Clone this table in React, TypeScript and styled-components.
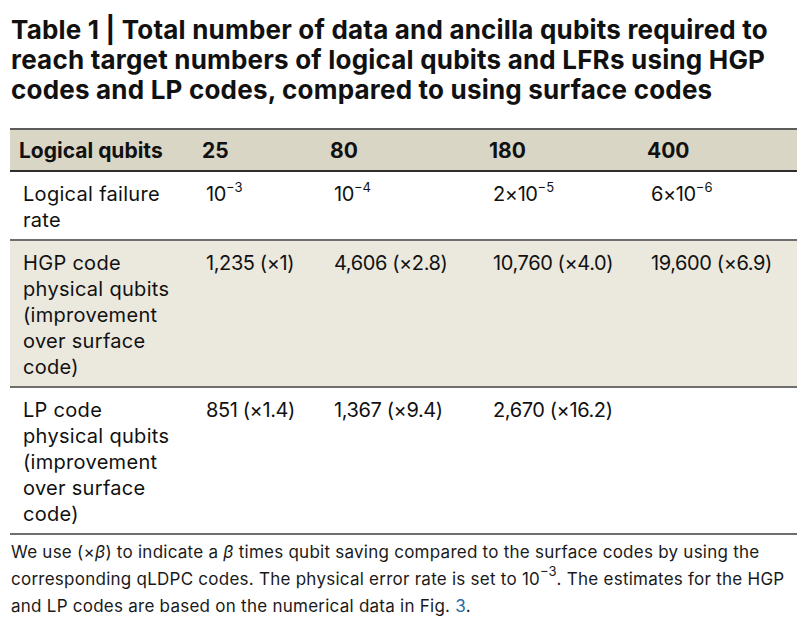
import styled, { createGlobalStyle } from "styled-components";

const GlobalStyle = createGlobalStyle`
  body {
    margin: 0;
    background: #ffffff;
    color: #111111;
    font-family: Inter, "Liberation Sans", Arial, sans-serif;
  }
`;

const Page = styled.div`
  width: 808px;
  height: 628px;
  padding: 15px 10px 0 11px;
  box-sizing: border-box;
  overflow: hidden;
`;

const Title = styled.h1`
  margin: 0;
  font-size: 26px;
  line-height: 30px;
  font-weight: 700;
  letter-spacing: 0.2px;
  white-space: nowrap;
`;

const Table = styled.table`
  margin-top: 23px;
  margin-left: -1px;
  width: 787px;
  border-collapse: collapse;
  table-layout: fixed;
  border-top: 2px solid #5c5c5c;
  border-bottom: 2px solid #5c5c5c;
`;

const HeadRow = styled.tr`
  background: #d9d6c6;
  border-bottom: 2px solid #2e2e2e;
`;

const HeadCell = styled.th`
  height: 40px;
  padding: 0 0 0 9px;
  text-align: left;
  font-size: 21px;
  font-weight: 700;
  letter-spacing: 0;
`;

const Row = styled.tr<{ $shaded?: boolean }>`
  background: ${(p) => (p.$shaded ? "#ebe8de" : "#ffffff")};
  border-bottom: 2px solid #6e6e6e;
`;

const Cell = styled.td<{ $label?: boolean }>`
  padding: 9px 4px 6px 13px;
  vertical-align: top;
  font-size: 20px;
  line-height: 26px;
  letter-spacing: ${(p) => (p.$label ? "0.3px" : "-0.4px")};
  white-space: nowrap;
`;

const Sup = styled.sup`
  font-size: 13px;
  line-height: 0;
  vertical-align: 9px;
  letter-spacing: 0;
`;

const Note = styled.p`
  margin: 4px 0 0;
  font-size: 17px;
  line-height: 27px;
  color: #1a1a1a;
  letter-spacing: 0.25px;
  white-space: nowrap;
`;

const Link = styled.span`
  color: #2a6ba6;
`;

const Beta = () => <i>β</i>;

const columns = [183, 128, 159, 158, 159];

const rows: { label: string[]; values: React.ReactNode[]; shaded?: boolean }[] = [
  {
    label: ["Logical failure", "rate"],
    values: [
      <>10<Sup>−3</Sup></>,
      <>10<Sup>−4</Sup></>,
      <>2×10<Sup>−5</Sup></>,
      <>6×10<Sup>−6</Sup></>,
    ],
  },
  {
    label: ["HGP code", "physical qubits", "(improvement", "over surface", "code)"],
    values: ["1,235 (×1)", "4,606 (×2.8)", "10,760 (×4.0)", "19,600 (×6.9)"],
    shaded: true,
  },
  {
    label: ["LP code", "physical qubits", "(improvement", "over surface", "code)"],
    values: ["851 (×1.4)", "1,367 (×9.4)", "2,670 (×16.2)", ""],
  },
];

const App = () => {
  return (
    <>
      <GlobalStyle />
      <Page>
        <Title>
          Table 1 | Total number of data and ancilla qubits required to
          <br />
          reach target numbers of logical qubits and LFRs using HGP
          <br />
          codes and LP codes, compared to using surface codes
        </Title>
        <Table>
          <colgroup>
            {columns.map((w, i) => (
              <col key={i} style={{ width: w }} />
            ))}
          </colgroup>
          <thead>
            <HeadRow>
              <HeadCell>Logical qubits</HeadCell>
              <HeadCell>25</HeadCell>
              <HeadCell>80</HeadCell>
              <HeadCell>180</HeadCell>
              <HeadCell>400</HeadCell>
            </HeadRow>
          </thead>
          <tbody>
            {rows.map((r) => (
              <Row key={r.label.join(" ")} $shaded={r.shaded}>
                <Cell $label>
                  {r.label.map((line, i) => (
                    <span key={i}>
                      {i > 0 && <br />}
                      {line}
                    </span>
                  ))}
                </Cell>
                {r.values.map((v, i) => (
                  <Cell key={i}>{v}</Cell>
                ))}
              </Row>
            ))}
          </tbody>
        </Table>
        <Note>
          We use (×<Beta />) to indicate a <Beta /> times qubit saving compared to the surface codes by using the
          <br />
          corresponding qLDPC codes. The physical error rate is set to 10<Sup>−3</Sup>. The estimates for the HGP
          <br />
          and LP codes are based on the numerical data in Fig. <Link>3</Link>.
        </Note>
      </Page>
    </>
  );
};

export default App;
